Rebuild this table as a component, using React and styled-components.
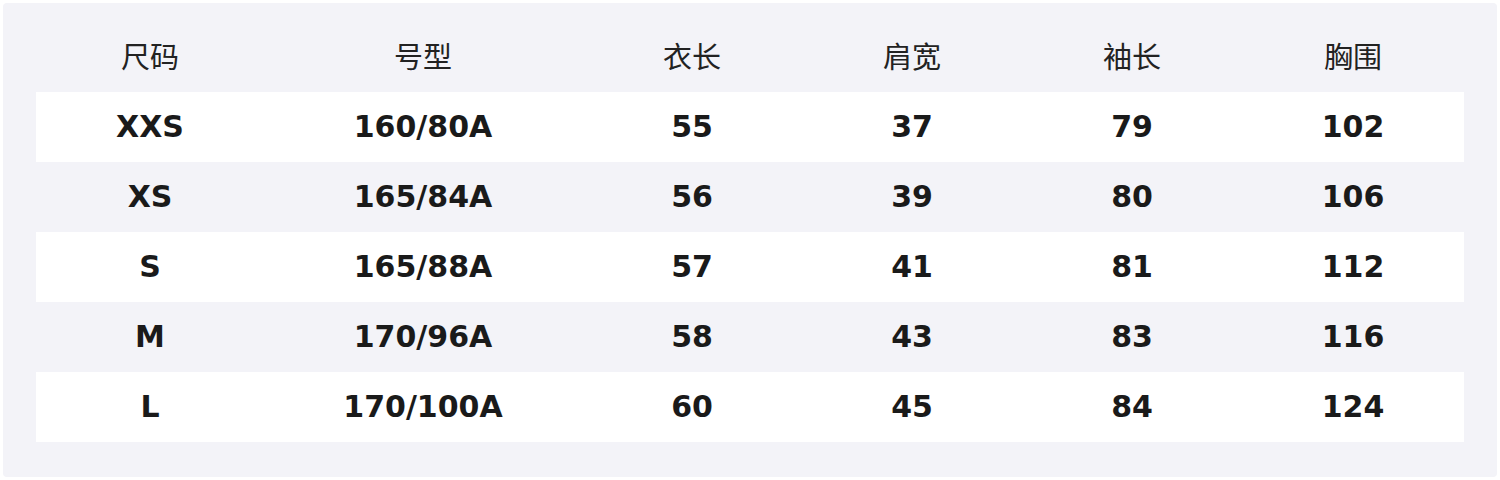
import React from "react";
import styled, { createGlobalStyle } from "styled-components";

const GlobalStyle = createGlobalStyle`
  body {
    margin: 0;
    background: #ffffff;
    font-family: "DejaVu Sans", "Noto Sans CJK SC", sans-serif;
  }
`;

const Panel = styled.div`
  margin: 3px;
  height: 474px;
  box-sizing: border-box;
  padding: 19px 33px 0;
  background: #f3f3f8;
  border-radius: 4px;
`;

const Row = styled.div`
  display: grid;
  grid-template-columns: 228px 318px 220px 220px 220px 222px;
  height: 70px;
  align-items: center;
  background: ${(p) => (p.$striped ? "#ffffff" : "transparent")};
`;

const HeadCell = styled.div`
  text-align: center;
  font-family: "Noto Sans CJK SC", sans-serif;
  font-size: 29px;
  font-weight: 400;
  color: #222222;
  padding-bottom: 4px;
`;

const Cell = styled.div`
  text-align: center;
  font-family: "DejaVu Sans", sans-serif;
  font-size: 30px;
  font-weight: 700;
  color: #1a1a1a;
  padding-bottom: 1px;
`;

const headers = ["尺码", "号型", "衣长", "肩宽", "袖长", "胸围"];

const rows = [
  ["XXS", "160/80A", "55", "37", "79", "102"],
  ["XS", "165/84A", "56", "39", "80", "106"],
  ["S", "165/88A", "57", "41", "81", "112"],
  ["M", "170/96A", "58", "43", "83", "116"],
  ["L", "170/100A", "60", "45", "84", "124"],
];

export default function App() {
  return (
    <>
      <GlobalStyle />
      <Panel>
        <Row>
          {headers.map((h) => (
            <HeadCell key={h}>{h}</HeadCell>
          ))}
        </Row>
        {rows.map((r, i) => (
          <Row key={r[0]} $striped={i % 2 === 0}>
            {r.map((v, j) => (
              <Cell key={j}>{v}</Cell>
            ))}
          </Row>
        ))}
      </Panel>
    </>
  );
}
